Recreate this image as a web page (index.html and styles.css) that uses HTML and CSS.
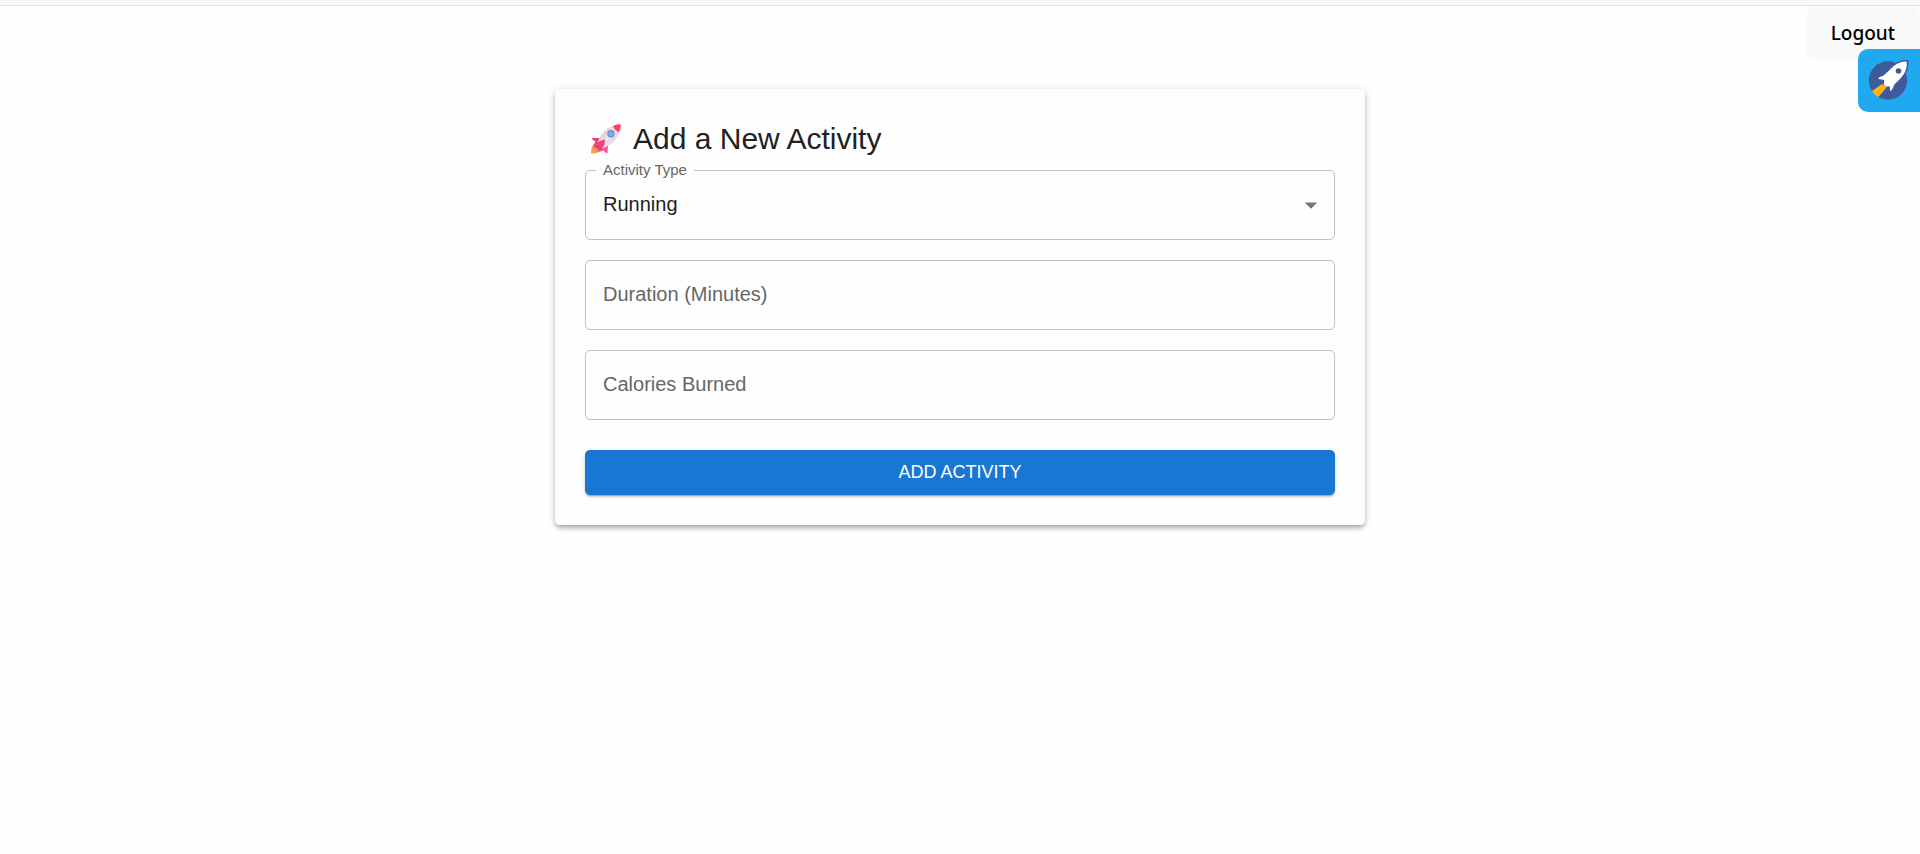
FILE: index.html
```html
<!DOCTYPE html>
<html lang="en">
<head>
<meta charset="utf-8">
<meta name="viewport" content="width=device-width, initial-scale=1">
<title>Add a New Activity</title>
<link rel="stylesheet" href="styles.css">
</head>
<body>
<header class="topbar"></header>
<div class="toolbar">
  <button class="logout" type="button">Logout</button>
</div>
<button class="launcher" type="button" aria-label="Launch">
  <svg class="launcher-icon" viewBox="0 0 42 42" aria-hidden="true">
    <circle cx="20" cy="21" r="19.2" fill="#3e5a9b"/>
    <path d="M39.500 1C31 1 25 5 20.500 10.500L15 15.500C12 16 10 17.500 8.500 20L15.500 21L15 25.500L17.500 28L21 27.500L21.500 33.500C24.500 31 26.500 29 26.500 26L32 20.500C37.500 15.500 40.500 9 39.500 1Z" fill="#fff" stroke="#3e5a9b" stroke-width="1.600" stroke-linejoin="round"/>
    <circle cx="30.500" cy="11.500" r="2.800" fill="#3e5a9b"/>
    <path d="M14 24.500L18.500 28L10.500 37.500C8 36.500 5.500 34.500 4 31.500Z" fill="#fdb515"/>
  </svg>
</button>
<main class="page">
  <form class="card">
    <h1 class="title">
      <svg class="title-icon" viewBox="0 0 30 30" aria-hidden="true">
        <defs>
          <linearGradient id="hull" x1="0" y1="0" x2="1" y2="1">
            <stop offset="0.200" stop-color="#cfc8cd"/>
            <stop offset="0.500" stop-color="#eee6ef"/>
            <stop offset="0.850" stop-color="#dccbe3"/>
          </linearGradient>
          <linearGradient id="flame" x1="1" y1="0" x2="0" y2="1">
            <stop offset="0" stop-color="#e66f51"/>
            <stop offset="1" stop-color="#ffab52"/>
          </linearGradient>
        </defs>
        <path d="M5 19.500C1 21 0 24 0 29.500C5 30 9 28 10 25Z" fill="url(#flame)"/>
        <path d="M9.500 14L1.500 14C0.500 14.300 1 15.500 2 16L4.500 17.500L2 22L7 22Z" fill="#ee3f78"/>
        <path d="M17 20.500L16.500 28.500C16.200 29.600 15.200 29.300 14.500 28.500L12.500 26.500L8 28L9 24Z" fill="#ff4f91"/>
        <path d="M6.500 20C8 11 16 1.500 29 0.500C30 12 21 22 10.500 24.500Z" fill="url(#hull)"/>
        <path d="M22 2.500C24 1 27 0 29.500 0.500C30.200 3 29.200 6 27.800 8.200C25.500 7.500 23 5 22 2.500Z" fill="#f94362"/>
        <path d="M14 15.500C8 16.500 4.500 20 3 23.500L8 24.500L6.500 27.500C11 26 14 22 14 15.500Z" fill="#f83e75"/>
        <path d="M5.500 21.500L9.500 25.500" stroke="#74649a" stroke-width="1.300"/>
        <circle cx="20" cy="9.700" r="3.700" fill="#8178a5"/>
        <circle cx="20" cy="9.700" r="2.800" fill="#63b4fb"/>
      </svg>
      Add a New Activity
    </h1>
    <div class="field field-select">
      <label class="label label-raised" for="type">Activity Type</label>
      <select class="control" id="type">
        <option>Running</option>
        <option>Walking</option>
        <option>Cycling</option>
      </select>
      <svg class="arrow" viewBox="0 0 24 24" aria-hidden="true"><path d="M7 10l5 5 5-5z" fill="#757575"/></svg>
    </div>
    <div class="field">
      <input class="control" id="duration" type="text" inputmode="numeric" placeholder=" ">
      <label class="label" for="duration">Duration (Minutes)</label>
    </div>
    <div class="field">
      <input class="control" id="calories" type="text" inputmode="numeric" placeholder=" ">
      <label class="label" for="calories">Calories Burned</label>
    </div>
    <button class="submit" type="submit">ADD ACTIVITY</button>
  </form>
</main>
</body>
</html>
```
FILE: styles.css
```css
* {
  box-sizing: border-box;
}

body {
  margin: 0;
  background: #fefefe;
  color: #212121;
  font-family: "Liberation Sans", Arial, sans-serif;
  font-size: 20px;
}

button,
select,
input {
  margin: 0;
  font: inherit;
}

.topbar {
  height: 6px;
  background: #f9f8ff;
  border-bottom: 1px solid #e2deee;
}

.toolbar {
  display: flex;
  justify-content: flex-end;
}

.logout {
  padding: 13px 25px 11px;
  border: 0;
  border-radius: 10px;
  background: #f9f9f9;
  color: #000;
  font-family: "Noto Sans", "Open Sans", sans-serif;
  font-size: 19px;
  font-weight: 500;
  line-height: 29px;
}

/* Tab pinned to the window edge, over the page */
.launcher {
  position: absolute;
  top: 49px;
  right: 0;
  display: flex;
  padding: 10px;
  border: 0;
  border-radius: 10px 0 0 10px;
  background: #1fa9f1;
}

.launcher-icon {
  width: 42px;
  height: 43px;
}

.page {
  padding: 30px;
}

.card {
  display: flex;
  flex-direction: column;
  gap: 20px;
  max-width: 810px;
  margin: 0 auto;
  padding: 30px;
  border-radius: 5px;
  background: #fefefe;
  box-shadow: 0 4px 5px -2px rgba(0, 0, 0, 0.2),
    0 3px 5px 0 rgba(0, 0, 0, 0.14), 0 1px 10px 0 rgba(0, 0, 0, 0.12);
}

.title {
  display: flex;
  align-items: center;
  gap: 12px;
  margin: 0 0 -8px;
  padding-left: 6px;
  font-size: 30px;
  font-weight: 400;
  line-height: 39px;
}

.title-icon {
  width: 30px;
  height: 30px;
}

.field {
  position: relative;
}

.control {
  display: block;
  width: 100%;
  height: 70px;
  padding: 0 17px 2px;
  border: 1px solid #c0c0c0;
  border-radius: 5px;
  outline: 0;
  background: transparent;
  color: #212121;
  appearance: none;
}

.field-select .control {
  padding-right: 50px;
}

.control:focus {
  border-color: #1976d2;
}

/* Labels lie over the outline and the empty control */
.label {
  position: absolute;
  top: 22px;
  left: 18px;
  color: #666;
  line-height: 24px;
  pointer-events: none;
}

.label-raised,
.control:focus + .label,
.control:not(:placeholder-shown) + .label {
  top: -10px;
  left: 11px;
  padding: 0 7px;
  background: #fefefe;
  font-size: 15px;
  line-height: 20px;
}

.arrow {
  position: absolute;
  top: 20px;
  right: 9px;
  width: 30px;
  height: 30px;
  pointer-events: none;
}

.submit {
  margin-top: 10px;
  padding: 10px;
  border: 0;
  border-radius: 5px;
  background: #1976d2;
  color: #fff;
  font-size: 18px;
  line-height: 25px;
  box-shadow: 0 3px 1px -2px rgba(0, 0, 0, 0.2),
    0 2px 2px 0 rgba(0, 0, 0, 0.14), 0 1px 5px 0 rgba(0, 0, 0, 0.12);
}
```
